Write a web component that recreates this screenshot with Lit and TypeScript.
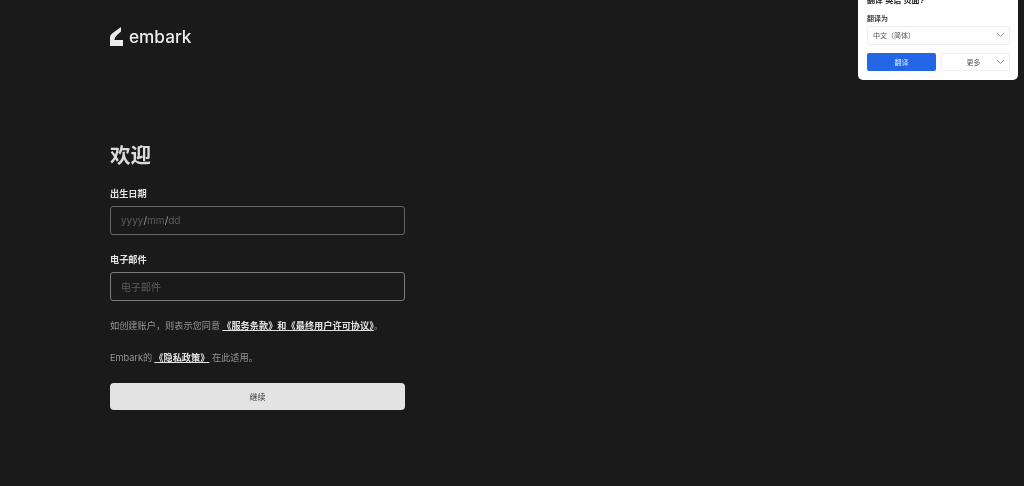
import { LitElement, html, css } from 'lit';
import { customElement } from 'lit/decorators.js';

const chevron = html`<svg class="chev" width="9" height="6" viewBox="0 0 9 6" fill="none"><path d="M1 1l3.5 3.5L8 1" stroke="#999" stroke-width="1"/></svg>`;

// translate bubble that sits over the top right corner of the page
@customElement('translate-popup')
export class TranslatePopup extends LitElement {
  static styles = css`
    :host {
      position: absolute;
      top: 0;
      right: 6px;
      width: 160px;
      height: 80px;
      box-sizing: border-box;
      padding: 0 8px 0 9px;
      background: #fff;
      border-radius: 0 0 5px 5px;
      overflow: hidden;
      color: #333;
      font-size: 7px;
      font-family: "Liberation Sans", "Noto Sans CJK SC", sans-serif;
      filter: blur(0.3px);
    }
    .title {
      height: 5px;
      line-height: 5px;
      font-size: 8px;
      font-weight: 700;
      color: #222;
    }
    .title span {
      position: relative;
      top: -2px;
    }
    .label {
      margin-top: 9px;
      height: 9px;
      line-height: 9px;
      font-weight: 700;
      color: #444;
    }
    .select {
      margin-top: 3px;
      height: 19px;
      border: 1px solid #eceef0;
      border-radius: 2px;
      box-sizing: border-box;
      display: flex;
      align-items: center;
      justify-content: space-between;
      padding: 0 4px 2px 5px;
      color: #555;
    }
    .actions {
      margin-top: 8px;
      display: flex;
      gap: 5px;
    }
    .primary {
      width: 69px;
      height: 18px;
      background: #2467e6;
      border-radius: 2px;
      color: #dbe7ff;
      display: flex;
      align-items: center;
      justify-content: center;
    }
    .more {
      width: 69px;
      height: 18px;
      box-sizing: border-box;
      border: 1px solid #eceef0;
      border-radius: 2px;
      color: #555;
      display: flex;
      align-items: center;
      justify-content: center;
      padding-right: 4px;
      position: relative;
    }
    .more .chev {
      position: absolute;
      right: 4px;
      top: 5px;
    }
  `;

  render() {
    return html`
      <div class="title"><span>翻译 英语 页面?</span></div>
      <div class="label">翻译为</div>
      <div class="select"><span>中文（简体）</span>${chevron}</div>
      <div class="actions">
        <div class="primary">翻译</div>
        <div class="more">更多${chevron}</div>
      </div>
    `;
  }
}

@customElement('app-root')
export class AppRoot extends LitElement {
  static styles = css`
    :host {
      display: block;
      position: relative;
      width: 1024px;
      height: 486px;
      overflow: hidden;
      background: #1a1a1a;
      color: #e6e6e6;
      font-family: Inter, "Noto Sans CJK SC", sans-serif;
    }
    .page {
      width: 296px;
      margin-left: 110px;
      padding-top: 27px;
      filter: blur(0.45px);
    }
    .logo {
      height: 19px;
      display: flex;
      align-items: center;
      gap: 6px;
    }
    .logo-text {
      font-size: 17.2px;
      line-height: 17px;
      font-weight: 500;
      color: #ececec;
    }
    h1 {
      margin: 97px 0 0;
      font-size: 20.5px;
      line-height: 26px;
      font-weight: 700;
      color: #dcdcdc;
    }
    .field {
      display: flex;
      flex-direction: column;
    }
    .field.first {
      margin-top: 18px;
    }
    .field.second {
      margin-top: 18.5px;
    }
    label {
      font-size: 9.2px;
      line-height: 13px;
      font-weight: 700;
      color: #e2e2e2;
    }
    .input {
      margin-top: 6px;
      width: 295px;
      height: 28.5px;
      box-sizing: border-box;
      border: 1.5px solid #666;
      border-radius: 3px;
      padding: 0 10px;
      display: flex;
      align-items: center;
      font-size: 10px;
      color: #5c5c5c;
    }
    .input.active {
      border-color: #7c7c7c;
    }
    .sep {
      color: #9a9a9a;
    }
    p {
      margin: 0;
      font-size: 9.2px;
      line-height: 14px;
      color: #969696;
    }
    p.terms {
      margin-top: 18px;
    }
    p.privacy {
      margin-top: 18px;
    }
    a {
      color: #e2e2e2;
      font-weight: 700;
      text-decoration: underline;
      text-underline-offset: 1px;
    }
    a.gap {
      margin-left: 2px;
    }
    button {
      display: block;
      margin-top: 18px;
      width: 295px;
      height: 27px;
      border: 0;
      border-radius: 4px;
      background: #e3e3e3;
      color: #333;
      font-family: inherit;
      font-size: 8px;
      padding: 0;
    }
  `;

  render() {
    return html`
      <div class="page">
        <div class="logo">
          <svg width="13" height="19" viewBox="0 0 13 19">
            <path d="M0 19V10.5C0 8.6 .8 7.4 2.4 6.2L11 0V4.6L6.6 8.4C5.4 9.6 4.6 11.2 4.4 13H13V19Z" fill="#ececec"/>
          </svg>
          <span class="logo-text">embark</span>
        </div>
        <h1>欢迎</h1>
        <div class="field first">
          <label>出生日期</label>
          <div class="input"><span>yyyy</span><span class="sep">/</span><span>mm</span><span class="sep">/</span><span>dd</span></div>
        </div>
        <div class="field second">
          <label>电子邮件</label>
          <div class="input active">电子邮件</div>
        </div>
        <p class="terms">如创建账户，则表示您同意<a class="gap">《服务条款》和《最终用户许可协议》</a>。</p>
        <p class="privacy">Embark的<a class="gap">《隐私政策》</a> 在此适用。</p>
        <button>继续</button>
      </div>
      <translate-popup></translate-popup>
    `;
  }
}
